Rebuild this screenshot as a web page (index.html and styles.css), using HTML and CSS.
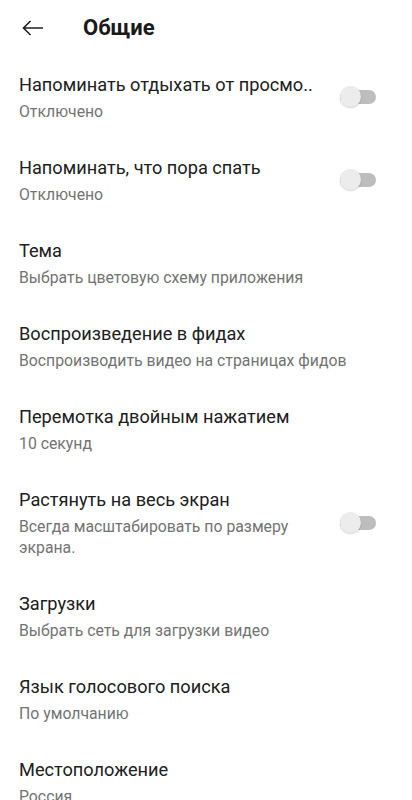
FILE: index.html
```html
<!DOCTYPE html>
<html lang="ru">
<head>
<meta charset="utf-8">
<link rel="stylesheet" href="styles.css">
</head>
<body>
<header class="appbar">
  <svg class="back" width="22" height="16" viewBox="0 0 22 16"><path d="M21 8H1.5M8.5 1L1.5 8l7 7" fill="none" stroke="#212121" stroke-width="1.6"/></svg>
  <h1 class="title">Общие</h1>
</header>
<main class="list">
  <div class="row">
    <div class="text"><div class="t">Напоминать отдыхать от просмо..</div><div class="s">Отключено</div></div>
    <div class="switch"></div>
  </div>
  <div class="row">
    <div class="text"><div class="t">Напоминать, что пора спать</div><div class="s">Отключено</div></div>
    <div class="switch"></div>
  </div>
  <div class="row">
    <div class="text"><div class="t">Тема</div><div class="s">Выбрать цветовую схему приложения</div></div>
  </div>
  <div class="row">
    <div class="text"><div class="t">Воспроизведение в фидах</div><div class="s">Воспроизводить видео на страницах фидов</div></div>
  </div>
  <div class="row">
    <div class="text"><div class="t">Перемотка двойным нажатием</div><div class="s">10 секунд</div></div>
  </div>
  <div class="row">
    <div class="text"><div class="t">Растянуть на весь экран</div><div class="s narrow">Всегда масштабировать по размеру экрана.</div></div>
    <div class="switch"></div>
  </div>
  <div class="row">
    <div class="text"><div class="t">Загрузки</div><div class="s">Выбрать сеть для загрузки видео</div></div>
  </div>
  <div class="row">
    <div class="text"><div class="t">Язык голосового поиска</div><div class="s">По умолчанию</div></div>
  </div>
  <div class="row">
    <div class="text"><div class="t">Местоположение</div><div class="s">Россия</div></div>
  </div>
</main>
</body>
</html>
```
FILE: styles.css
```css
html, body {
  margin: 0;
  padding: 0;
  background: #ffffff;
  font-family: Roboto, "Noto Sans", sans-serif;
  overflow: hidden;
}
.appbar {
  height: 56px;
  display: flex;
  align-items: center;
  padding-left: 22px;
  box-sizing: border-box;
}
.back {
  display: block;
  margin-top: 0;
}
.title {
  margin: 0 0 0 39px;
  font-size: 22px;
  font-weight: 700;
  color: #1a1a1a;
  line-height: 28px;
}
.list {
  display: flex;
  flex-direction: column;
}
.row {
  display: flex;
  align-items: center;
  padding: 16px 36px 17px 19px;
}
.text {
  flex: 1;
  min-width: 0;
}
.t {
  font-size: 18.2px;
  line-height: 25px;
  color: #202020;
  white-space: nowrap;
}
.s {
  margin-top: 4px;
  font-size: 15.8px;
  line-height: 21px;
  color: #737373;
}
.s.narrow {
  max-width: 300px;
}
.switch {
  position: relative;
  width: 36px;
  height: 14px;
  border-radius: 7px;
  background: #bdbdbd;
  flex: none;
}
.switch::before {
  content: "";
  position: absolute;
  left: 0;
  top: -4px;
  width: 21px;
  height: 21px;
  border-radius: 50%;
  background: #ececec;
  box-shadow: 0 1px 2px rgba(0,0,0,0.18);
}
```
